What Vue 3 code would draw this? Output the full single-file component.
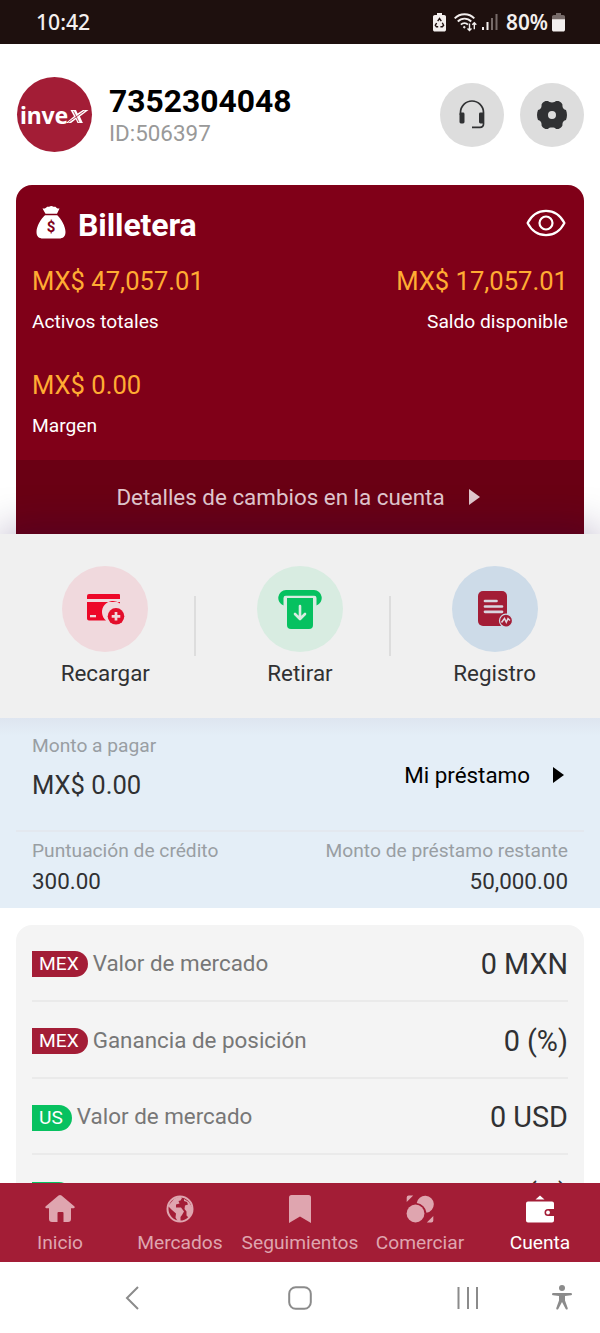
<script setup>
const balances = [
  { amount: 'MX$ 47,057.01', label: 'Activos totales' },
  { amount: 'MX$ 17,057.01', label: 'Saldo disponible' },
  { amount: 'MX$ 0.00', label: 'Margen' },
]
const markets = [
  { tag: 'MEX', kind: 'mex', label: 'Valor de mercado', value: '0 MXN' },
  { tag: 'MEX', kind: 'mex', label: 'Ganancia de posición', value: '0 (%)' },
  { tag: 'US', kind: 'us', label: 'Valor de mercado', value: '0 USD' },
  { tag: 'US', kind: 'us', label: 'Ganancia de posición', value: '0 (%)' },
]
</script>

<template>
  <div class="screen">
    <div class="status">
      <span class="clock">10:42</span>
      <div class="indicators">
        <svg class="saver" width="13" height="19" viewBox="0 0 13 19">
          <path d="M4 0h5v2h2.200c1 0 1.800.8 1.800 1.800v13c0 1-.8 1.800-1.800 1.800H1.800c-1 0-1.800-.8-1.800-1.800v-13C0 2.800.8 2 1.800 2H4z" fill="#f3efee" />
          <path d="M4.700 8.200l1.800-2.700 1.800 2.700M9.300 9.800l1.300 2.500-1.300 1.500H7.400M5.200 13.800H3.400l-1.100-1.500 1.300-2.300" fill="none" stroke="#1e100e" stroke-width="1.400" />
        </svg>
        <svg class="wifi" width="23" height="19" viewBox="0 0 23 19" fill="none" stroke="#f3efee" stroke-width="1.900">
          <path d="M.7 5.300C6-.2 15-.2 20.300 5.300M3.800 8.500c3.600-3.800 9.800-3.800 13.400 0M6.900 11.600c2-2 5.200-2 7 0" />
          <circle cx="10.300" cy="14.200" r=".8" fill="#f3efee" stroke-width="1" />
          <path d="M15.500 10.500v7m-2-2 2 2 2-2M20.300 16.200V9.800m-2 2 2-2 2 2" stroke-width="1.400" />
        </svg>
        <svg class="signal" width="16" height="18" viewBox="0 0 16 18">
          <path d="M0 14h2v3H0zM4.500 9h2v8h-2z" fill="#f3efee" />
          <path d="M9 5h2v12H9zM13.500 1h2v16h-2z" fill="#776b69" />
        </svg>
        <span class="percent">80%</span>
        <svg width="13" height="19" viewBox="0 0 13 19">
          <path d="M4 0h5v2h2.200c1 0 1.800.8 1.800 1.800V7H0V3.800C0 2.800.8 2 1.800 2H4z" fill="#776b69" />
          <path d="M0 6.300h13v10.500c0 1-.8 1.800-1.800 1.800H1.800c-1 0-1.800-.8-1.800-1.800z" fill="#f3efee" />
        </svg>
      </div>
    </div>

    <header class="profile">
      <div class="avatar">
        <span class="brand">inve</span>
        <svg class="brand-x" width="23" height="15" viewBox="0 0 23 15">
          <path d="M4.500 1H10l1.600 3.600L17 1h5.500l-8.600 6.600 3 6.400h-5.400l-1.700-3.700L5 14H0l8-6.700z" fill="#fff" />
          <path d="M2.500 13.300L18.500 2M7.500 2.200l5.500 11" stroke="#a31d36" stroke-width=".8" />
        </svg>
      </div>
      <div class="identity">
        <strong>7352304048</strong>
        <span>ID:506397</span>
      </div>
      <div class="round">
        <svg width="26" height="29" viewBox="0 0 26 29">
          <path d="M1.500 15v-2.500a11.500 11.500 0 0 1 23 0V24c0 2.400-1 3.300-3.500 3.300h-8" fill="none" stroke="#303133" stroke-width="1.700" />
          <rect x=".5" y="12.500" width="5" height="11" rx="1.400" fill="#303133" />
          <rect x="20" y="12.500" width="5" height="11" rx="1.400" fill="#303133" />
        </svg>
      </div>
      <div class="round">
        <svg width="30" height="28" viewBox="0 0 30 28">
          <path fill="#303133" fill-rule="evenodd" d="M8.500 0h2.600c.8 1.900 7 1.900 7.800 0h2.600c2.100.9 3.300 2 4 3.800-.4 2.600 1 4.600 3.500 5.200 1.300 3.300 1.300 6.700 0 10-2.500.6-3.900 2.600-3.500 5.200-.7 1.800-1.900 2.900-4 3.800h-2.600c-.8-1.900-7-1.900-7.800 0H8.500c-2.100-.9-3.300-2-4-3.800.4-2.600-1-4.600-3.500-5.200-1.300-3.300-1.300-6.700 0-10 2.500-.6 3.900-2.600 3.500-5.200C5.200 2 6.400.9 8.500 0zM15 10a4 4 0 1 0 0 8 4 4 0 0 0 0-8z" />
        </svg>
      </div>
    </header>

    <section class="wallet">
      <div class="wallet-head">
        <svg width="30" height="34" viewBox="0 0 30 34">
          <path fill="#fff" d="M6.500 2.500C9 2.800 10 2.200 11 .8h2.200c1.200-1 3-1 4.200 0h2.100c1 1.400 2 2 4 1.700L21 7.800H9.500zM9 9.300h12.300C25 12.500 29.500 20.500 29.500 26c0 4.500-2.500 6.500-6.500 6.500H7C3 32.500.5 30.500.5 26 .5 20.500 5 12.500 9 9.300z" />
          <text x="15" y="26" text-anchor="middle" class="dollar">$</text>
        </svg>
        <h2>Billetera</h2>
        <svg class="eye" width="40" height="28" viewBox="0 0 40 28" fill="none" stroke="#fff" stroke-width="2.200">
          <path d="M1.600 14C10-2.200 30-2.200 38.400 14 30 30.200 10 30.200 1.600 14z" stroke-linejoin="round" />
          <circle cx="20" cy="14" r="6.500" />
        </svg>
      </div>
      <div class="balances">
        <div v-for="b in balances" :key="b.label" class="balance">
          <b>{{ b.amount }}</b>
          <span>{{ b.label }}</span>
        </div>
      </div>
      <div class="details">
        <span>Detalles de cambios en la cuenta</span>
        <svg width="11" height="16" viewBox="0 0 11 16"><path d="M0 0l11 8-11 8z" fill="#e2c8ce" /></svg>
      </div>
    </section>

    <section class="actions">
      <div class="action">
        <div class="bubble pink">
          <svg width="40" height="40" viewBox="-1 -1 40 40">
            <path d="M3 4h30q1 0 1 1v4H1V6q0-2 2-2zM1 12h33v1.500A10.500 10.500 0 0 0 20 30.500H3q-2 0-2-2z" fill="#ed0828" />
            <path d="M4 25h6v2.300H4z" fill="#f0d9dd" />
            <circle cx="30" cy="26.300" r="9.900" fill="#f0d9dd" />
            <circle cx="30" cy="26.300" r="8.300" fill="#e30e2b" />
            <path d="M30 22v8.600M25.700 26.300h8.600" stroke="#f0d9dd" stroke-width="2.700" />
          </svg>
        </div>
        <span>Recargar</span>
      </div>
      <div class="action">
        <div class="bubble green">
          <svg width="44" height="40" viewBox="0 0 44 40">
            <path d="M5.500 16.500A8 8 0 0 1 8 1h28a8 8 0 0 1 2.500 15.500V9q0-2.200-2.200-2.200H7.700Q5.500 6.800 5.500 9z" fill="#06c160" />
            <path d="M9 9h26v27q0 4-4 4H13q-4 0-4-4z" fill="#06c160" />
            <path d="M22 17v12.500M17 25l5 5 5-5" stroke="#d8ece1" stroke-width="2.600" fill="none" stroke-linecap="round" stroke-linejoin="round" />
          </svg>
        </div>
        <span>Retirar</span>
      </div>
      <div class="action">
        <div class="bubble blue">
          <svg width="36" height="36" viewBox="0 0 36 36">
            <rect x="1" y="0" width="29" height="35" rx="5" fill="#a31d36" />
            <path d="M8 10h11.500M8 15.500h17M8 20.800h17" stroke="#d9d6e0" stroke-width="2.700" stroke-linecap="round" />
            <circle cx="29" cy="29.700" r="6.500" fill="#a31d36" stroke="#cddbe8" stroke-width="1.200" />
            <path d="M24.500 31.500l3-4 1.800 3.800L31 27.500l2 2" stroke="#e2d6df" stroke-width="1.500" fill="none" />
          </svg>
        </div>
        <span>Registro</span>
      </div>
    </section>

    <section class="loan">
      <div class="loan-top">
        <div class="due">
          <span class="muted">Monto a pagar</span>
          <b>MX$ 0.00</b>
        </div>
        <div class="my-loan">
          <span>Mi préstamo</span>
          <svg width="11" height="16" viewBox="0 0 11 16"><path d="M0 0l11 8-11 8z" fill="#000" /></svg>
        </div>
      </div>
      <div class="loan-bottom">
        <div class="stat"><span class="muted">Puntuación de crédito</span><b>300.00</b></div>
        <div class="stat right"><span class="muted">Monto de préstamo restante</span><b>50,000.00</b></div>
      </div>
    </section>

    <section class="markets">
      <div v-for="(m, i) in markets" :key="i" class="market">
        <span class="tag" :class="m.kind">{{ m.tag }}</span>
        <span class="name">{{ m.label }}</span>
        <span class="value">{{ m.value }}</span>
      </div>
    </section>

    <nav class="tabs">
      <div class="tab">
        <svg width="30" height="28" viewBox="0 0 30 28"><path d="M13.500.6q1.500-1.200 3 0l13 10.900q.8 1.500-.8 1.800H26V24q0 3-3 3h-4.500V18q0-1-1-1h-4q-1 0-1 1v9H7q-3 0-3-3V13.300H1.300q-1.600-.3-.8-1.800z" fill="currentColor" /></svg>
        <span>Inicio</span>
      </div>
      <div class="tab">
        <svg width="28" height="28" viewBox="0 0 28 28">
          <circle cx="14" cy="14" r="12.500" fill="none" stroke="currentColor" stroke-width="2" />
          <path d="M2 11l6.500-7.500L14 1.500 16 3l-1.500 2.500-2 .5 1 2.500-3.500 1v3h5l3 4-2 3.500-1.500 2v4.500l-3-.5-2-3.500.5-4-4-3.500L3 12zM18 4l5 3 3.500 6-1 6-3 3.500-2-2v-4l-2-2.500.5-3.500 3-1-1-2.500-3-1z" fill="currentColor" />
        </svg>
        <span>Mercados</span>
      </div>
      <div class="tab">
        <svg width="24" height="28" viewBox="0 0 24 28"><path d="M1 2.500Q1 0 3.500 0h17Q23 0 23 2.500V28l-11-6.500L1 28z" fill="currentColor" /></svg>
        <span>Seguimientos</span>
      </div>
      <div class="tab">
        <svg width="28" height="28" viewBox="0 0 28 28" fill="currentColor">
          <path d="M.7 2.500Q.7.500 2.700.5h4.500L.7 7zM27.300 21v4.500q0 2-2 2h-4.500z" />
          <path d="M10.700 8A8.600 8.600 0 1 1 20.500 17.800 11 11 0 0 0 10.700 8z" />
          <circle cx="9.500" cy="18.500" r="8.900" />
        </svg>
        <span>Comerciar</span>
      </div>
      <div class="tab active">
        <svg width="30" height="28" viewBox="0 0 30 28" fill="currentColor">
          <path d="M10.500 4.500L15 .5l4.500 4zM3 6.500h24q2 0 2 2v5.500h-6a3.500 3.500 0 0 0 0 7h6v4.500q0 2-2 2H3q-2 0-2-2v-17q0-2 2-2z" />
          <circle cx="23" cy="17.500" r="1.900" />
        </svg>
        <span>Cuenta</span>
      </div>
    </nav>

    <div class="system">
      <svg class="back" width="14" height="24" viewBox="0 0 14 24"><path d="M13 1L2 12l11 11" /></svg>
      <svg class="home" width="24" height="24" viewBox="0 0 24 24"><rect x="1.200" y="1.200" width="21.600" height="21.600" rx="6.500" /></svg>
      <svg class="recent" width="22" height="22" viewBox="0 0 22 22"><path d="M1.500 0v22M11 0v22M20 0v22" /></svg>
      <svg class="access" width="20" height="25" viewBox="0 0 20 25">
        <circle cx="10" cy="3" r="3" fill="#8b8b8b" />
        <path d="M1.200 8Q0 8 0 9.200q0 1 1 1.100l6 .8v4.400L4.300 23q-.3 1 .5 1.500 1 .4 1.500-.6L10 17l3.700 6.900q.5 1 1.500.6.800-.5.500-1.500L13 15.500v-4.400l6-.8q1-.1 1-1.100Q20 8 18.800 8z" fill="#8b8b8b" />
      </svg>
    </div>
  </div>
</template>

<style>
body { background: #fff; }
</style>

<style scoped>
.screen { width: 600px; height: 1333px; overflow: hidden; display: flex; flex-direction: column; background: #fff; color: #303133; font-family: Roboto, "Liberation Sans", sans-serif; }
.screen * { box-sizing: border-box; }
svg { display: block; flex: none; }
span, b, strong { white-space: nowrap; }
b { font-weight: 400; }

.status { height: 44px; flex: none; background: #1e100e; color: #f3efee; display: flex; align-items: center; justify-content: space-between; padding: 0 35px 0 36px; font: 600 20.800px/30px "Noto Sans", sans-serif; }
.clock { font-weight: 500; font-size: 21.200px; }
.indicators { display: flex; align-items: center; }
.wifi { margin-left: 8px; }
.signal { margin-left: 5px; }
.percent { margin: 0 4px 0 8px; }

.profile { height: 141px; flex: none; display: flex; align-items: center; padding: 0 16px; }
.avatar { width: 75px; height: 75px; margin-left: 1px; border-radius: 50%; background: #a31d36; display: flex; align-items: center; justify-content: center; color: #fff; }
.brand { font: 700 23px/28px "Noto Sans", sans-serif; letter-spacing: -.2px; }
.brand-x { margin: 3px 0 0 -2px; }
.identity { flex: 1; margin-left: 17px; display: flex; flex-direction: column; }
.identity strong { font-size: 31.800px; line-height: 37px; color: #000; font-weight: 700; }
.identity span { font-size: 22.400px; line-height: 27px; color: #999; }
.round { width: 64px; height: 64px; margin-left: 16px; border-radius: 50%; background: #ddd; display: flex; align-items: center; justify-content: center; }

.wallet { height: 349px; flex: none; margin: 0 16px; border-radius: 16px 16px 0 0; background: #800018; display: flex; flex-direction: column; overflow: hidden; }
.wallet-head { height: 78px; padding: 0 18px 0 20px; display: flex; align-items: center; }
.wallet-head svg { margin-top: -3px; }
.wallet-head .eye { margin-top: -2px; }
.dollar { font: 700 15px Roboto, sans-serif; fill: #800018; }
h2 { margin: 2px 0 0 12px; flex: 1; font-size: 32px; line-height: 36px; font-weight: 700; color: #fff; letter-spacing: -.1px; }
.balances { flex: 1; min-height: 0; padding: 0 16px; display: grid; grid-template-columns: 1fr 1fr; grid-auto-rows: 103.500px; }
.balance { display: flex; flex-direction: column; color: #fff; }
.balance:nth-child(2) { text-align: right; }
.balance b { font-size: 25.600px; line-height: 36px; color: #ffac33; }
.balance span { margin-top: 9px; font-size: 19.200px; line-height: 27px; }
.details { height: 74px; flex: none; background: #6a0014; display: flex; align-items: center; justify-content: center; gap: 24px; padding-right: 4px; color: #e2c8ce; font-size: 22.400px; }

.actions { height: 184px; flex: none; position: relative; background: #f0f0f0; box-shadow: 0 -6px 38px rgba(25, 0, 75, .27); padding: 32px 8px 0; display: grid; grid-template-columns: repeat(3, 1fr); }
.action { display: flex; flex-direction: column; align-items: center; font-size: 22.400px; line-height: 30px; }
.action:not(:last-child) { background: linear-gradient(#ddd, #ddd) no-repeat 186px 30px / 2px 60px; }
.action span { margin-top: 6px; }
.bubble { width: 86px; height: 86px; border-radius: 50%; display: flex; align-items: center; justify-content: center; }
.pink { background: #f0d9dd; }
.green { background: #d8ece1; }
.blue { background: #cddbe8; }

.loan { height: 190px; flex: none; position: relative; padding: 0 16px; background: linear-gradient(#dee5f0, #e4eef7 18px); color: #303133; }
.loan-top { height: 114px; padding: 2px 16px 0; display: flex; justify-content: space-between; align-items: center; border-bottom: 2px solid #e3e8ef; }
.due { display: flex; flex-direction: column; height: 88px; }
.muted { color: #999ea3; font-size: 19.200px; line-height: 30px; }
.due b { margin-top: 6px; font-size: 25.600px; line-height: 36px; }
.my-loan { display: flex; align-items: center; gap: 23px; font-size: 22.400px; color: #000; padding-right: 4px; }
.loan-bottom { padding: 4px 16px 0; display: flex; justify-content: space-between; }
.stat { display: flex; flex-direction: column; }
.stat b { font-size: 22.400px; line-height: 31px; }
.right { text-align: right; }

.markets { flex: 1; min-height: 0; overflow: hidden; margin: 17px 16px 0; padding: 0 16px; background: #f4f4f4; border-radius: 16px 16px 0 0; }
.market { height: 76.800px; display: flex; align-items: center; border-bottom: 2px solid #eaeaea; }
.tag { height: 26px; margin-top: 4px; padding: 0 9px 0 7px; border-radius: 0 13px 13px 0; color: #fff; font-size: 19.200px; line-height: 26px; }
.mex { background: #a31d36; }
.us { background: #07c160; }
.name { margin: 1px 0 0 5px; color: #777; font-size: 22.400px; flex: 1; }
.value { margin-top: 3px; font-size: 28.800px; }

.tabs { height: 79px; flex: none; background: #a31d36; display: grid; grid-template-columns: repeat(5, 1fr); }
.tab { min-width: 0; display: flex; flex-direction: column; align-items: center; padding-top: 12px; color: #dfa5af; font-size: 19.200px; line-height: 26px; }
.tab span { margin-top: 7px; }
.active { color: #fff; }

.system { height: 71px; flex: none; display: flex; align-items: center; padding-left: 125px; }
.system svg { fill: none; stroke: #8b8b8b; stroke-width: 2; }
.system .access { stroke: none; margin-left: 73px; }
.home { margin-left: 149px; }
.recent { margin-left: 145px; }
</style>
